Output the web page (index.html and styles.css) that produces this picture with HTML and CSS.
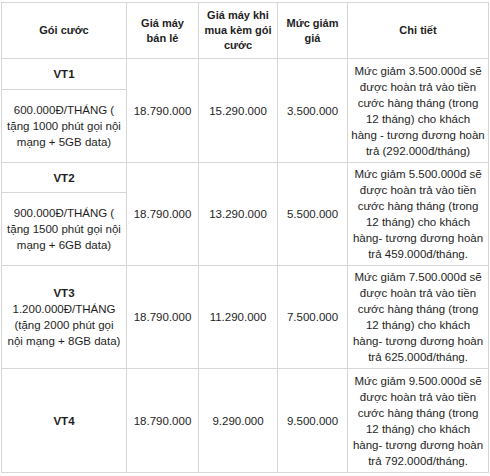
FILE: index.html
```html
<!DOCTYPE html>
<html>
<head>
<meta charset="utf-8">
<link rel="stylesheet" href="styles.css">
</head>
<body>
<table class="price-table">
  <colgroup>
    <col class="c1"><col class="c2"><col class="c3"><col class="c4"><col class="c5">
  </colgroup>
  <tr class="head">
    <th>Gói cước</th>
    <th>Giá máy<br>bán lẻ</th>
    <th>Giá máy khi<br>mua kèm gói<br>cước</th>
    <th>Mức giảm<br>giá</th>
    <th>Chi tiết</th>
  </tr>
  <tr class="title-row">
    <td class="plan-title">VT1</td>
    <td rowspan="2">18.790.000</td>
    <td rowspan="2">15.290.000</td>
    <td rowspan="2">3.500.000</td>
    <td rowspan="2" class="detail">Mức giảm 3.500.000đ sẽ<br>được hoàn trả vào tiền<br>cước hàng tháng (trong<br>12 tháng) cho khách<br>hàng - tương đương hoàn<br>trả (292.000đ/tháng)</td>
  </tr>
  <tr class="body-row">
    <td>600.000Đ/THÁNG (<br>tặng 1000 phút gọi nội<br>mạng + 5GB data)</td>
  </tr>
  <tr class="title-row2">
    <td class="plan-title">VT2</td>
    <td rowspan="2">18.790.000</td>
    <td rowspan="2">13.290.000</td>
    <td rowspan="2">5.500.000</td>
    <td rowspan="2" class="detail">Mức giảm 5.500.000đ sẽ<br>được hoàn trả vào tiền<br>cước hàng tháng (trong<br>12 tháng) cho khách<br>hàng- tương đương hoàn<br>trả 459.000đ/tháng.</td>
  </tr>
  <tr class="body-row">
    <td>900.000Đ/THÁNG (<br>tặng 1500 phút gọi nội<br>mạng + 6GB data)</td>
  </tr>
  <tr class="big-row">
    <td><b>VT3</b><br>1.200.000Đ/THÁNG<br>(tặng 2000 phút gọi<br>nội mạng + 8GB data)</td>
    <td>18.790.000</td>
    <td>11.290.000</td>
    <td>7.500.000</td>
    <td class="detail">Mức giảm 7.500.000đ sẽ<br>được hoàn trả vào tiền<br>cước hàng tháng (trong<br>12 tháng) cho khách<br>hàng- tương đương hoàn<br>trả 625.000đ/tháng.</td>
  </tr>
  <tr class="big-row last">
    <td class="plan-title">VT4</td>
    <td>18.790.000</td>
    <td>9.290.000</td>
    <td>9.500.000</td>
    <td class="detail">Mức giảm 9.500.000đ sẽ<br>được hoàn trả vào tiền<br>cước hàng tháng (trong<br>12 tháng) cho khách<br>hàng- tương đương hoàn<br>trả 792.000đ/tháng.</td>
  </tr>
</table>
</body>
</html>
```
FILE: styles.css
```css
html, body {
  margin: 0;
  padding: 0;
  background: #ffffff;
}
.price-table {
  margin: 2px 0 0 1px;
  border-collapse: collapse;
  table-layout: fixed;
  width: 487px;
  font-family: "Liberation Sans", Arial, sans-serif;
  font-size: 11.5px;
  line-height: 16px;
  color: #1e1e1e;
}
.c1 { width: 125px; }
.c2 { width: 72px; }
.c3 { width: 79px; }
.c4 { width: 70px; }
.c5 { width: 141px; }
.price-table th,
.price-table td {
  border: 1px solid #d6d6d6;
  text-align: center;
  vertical-align: middle;
  padding: 0 2px;
}
.price-table th {
  font-weight: bold;
  font-size: 11px;
  line-height: 15px;
}
.head { height: 56px; }
.title-row { height: 31px; }
.title-row2 { height: 30px; }
.body-row { height: 73px; }
.big-row { height: 103px; }
.big-row.last { height: 104px; }
.plan-title { font-weight: bold; }
.detail { padding: 3px 2px; }
```
